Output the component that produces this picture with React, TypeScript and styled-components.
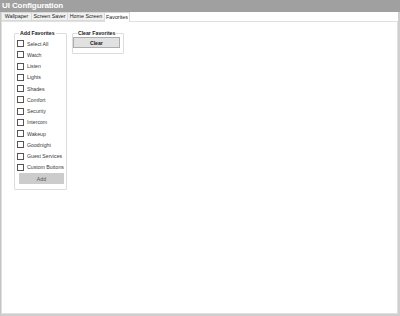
import styled, { createGlobalStyle } from "styled-components";

const GlobalStyle = createGlobalStyle`
	html, body {
		margin: 0;
		padding: 0;
		background: #ffffff;
	}
	body {
		font-family: "Liberation Sans", Arial, sans-serif;
	}
`;

const favorites = [
	"Select All",
	"Watch",
	"Listen",
	"Lights",
	"Shades",
	"Comfort",
	"Security",
	"Intercom",
	"Wakeup",
	"Goodnight",
	"Guest Services",
	"Custom Buttons",
];

const tabs = [
	{ label: "Wallpaper", width: 31 },
	{ label: "Screen Saver", width: 37 },
	{ label: "Home Screen", width: 38 },
	{ label: "Favorites", width: 26 },
];

const Window = styled.div`
	width: 400px;
	height: 316px;
	box-sizing: border-box;
	display: flex;
	flex-direction: column;
	background: #ffffff;
`;

const TitleBar = styled.div`
	height: 12px;
	flex: none;
	background: #a0a0a0;
	color: #ffffff;
	font-family: "Liberation Sans", Arial, sans-serif;
	font-weight: bold;
	font-size: 8px;
	line-height: 11px;
	padding-left: 2px;
	letter-spacing: -0.1px;
`;

const Body = styled.div`
	flex: 1;
	display: flex;
	flex-direction: column;
	border-left: 1px solid #c4c4c4;
	border-right: 2px solid #cfcfcf;
	border-bottom: 2px solid #cfcfcf;
`;

const TabStrip = styled.div`
	display: flex;
	align-items: flex-end;
	height: 9px;
	flex: none;
	position: relative;
	z-index: 1;
`;

const Tab = styled.div<{ $active?: boolean; $width: number }>`
	box-sizing: border-box;
	width: ${(p) => p.$width}px;
	height: ${(p) => (p.$active ? "10px" : "9px")};
	margin-bottom: ${(p) => (p.$active ? "-1px" : "0")};
	border: 1px solid #d9d9d9;
	border-bottom: ${(p) => (p.$active ? "none" : "1px solid #d9d9d9")};
	margin-right: -1px;
	background: ${(p) => (p.$active ? "#ffffff" : "#f0f0f0")};
	font-size: 5.3px;
	line-height: ${(p) => (p.$active ? "8px" : "7px")};
	text-align: center;
	color: #1a1a1a;
	white-space: nowrap;
`;

const Panel = styled.div`
	flex: 1;
	border: 1px solid #e0e0e0;
	display: flex;
	align-items: flex-start;
	gap: 5px;
	padding: 8px 0 0 12px;
`;

const Group = styled.fieldset<{ $width: number }>`
	box-sizing: border-box;
	width: ${(p) => p.$width}px;
	margin: 0;
	padding: 0 2px 5px 2px;
	border: 1px solid #dcdcdc;
	border-radius: 1px;
	display: flex;
	flex-direction: column;
	align-items: stretch;
`;

const Legend = styled.legend`
	font-size: 5.2px;
	font-weight: bold;
	color: #1a1a1a;
	padding: 0 1px;
	margin-left: 2px;
	line-height: 6px;
	white-space: nowrap;
`;

const CheckList = styled.div`
	display: flex;
	flex-direction: column;
	padding-top: 2px;
`;

const CheckRow = styled.label`
	display: flex;
	align-items: center;
	gap: 3px;
	height: 11.25px;
	font-size: 5.2px;
	color: #3a3a3a;
	white-space: nowrap;
`;

const Box = styled.span`
	box-sizing: border-box;
	width: 7px;
	height: 7px;
	border: 1px solid #555555;
	background: #ffffff;
	flex: none;
`;

const Button = styled.div<{ $disabled?: boolean }>`
	box-sizing: border-box;
	height: 11px;
	display: flex;
	align-items: center;
	justify-content: center;
	font-size: 5.2px;
	font-weight: ${(p) => (p.$disabled ? "normal" : "bold")};
	color: ${(p) => (p.$disabled ? "#555555" : "#1a1a1a")};
	background: ${(p) => (p.$disabled ? "#cccccc" : "#e1e1e1")};
	border: 1px solid ${(p) => (p.$disabled ? "#cccccc" : "#adadad")};
`;

const AddButton = styled(Button)`
	margin: 0 0 0 2px;
`;

const ClearButton = styled(Button)`
	margin: 1px 1px 0 -2px;
`;

export default function App() {
	return (
		<>
			<GlobalStyle />
			<Window>
				<TitleBar>UI Configuration</TitleBar>
				<Body>
					<TabStrip>
						{tabs.map((t) => (
							<Tab key={t.label} $width={t.width} $active={t.label === "Favorites"}>
								{t.label}
							</Tab>
						))}
					</TabStrip>
					<Panel>
						<Group $width={52}>
							<Legend>Add Favorites</Legend>
							<CheckList>
								{favorites.map((f) => (
									<CheckRow key={f}>
										<Box />
										{f}
									</CheckRow>
								))}
							</CheckList>
							<AddButton $disabled>Add</AddButton>
						</Group>
						<Group $width={52}>
							<Legend>Clear Favorites</Legend>
							<ClearButton>Clear</ClearButton>
						</Group>
					</Panel>
				</Body>
			</Window>
		</>
	);
}
